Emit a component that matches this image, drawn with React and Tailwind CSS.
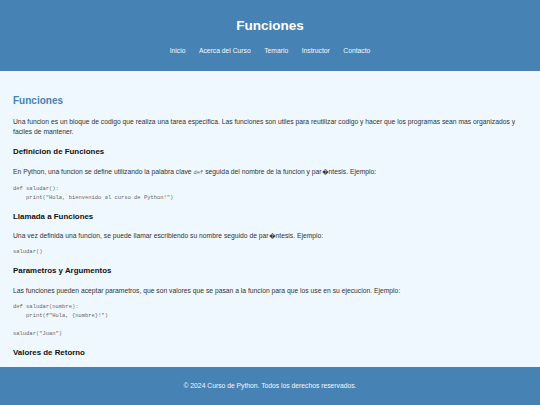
const navItems = ['Inicio', 'Acerca del Curso', 'Temario', 'Instructor', 'Contacto'];

const font = { fontFamily: '"Liberation Sans", Arial, sans-serif' };

function Code({ children }) {
  return (
    <pre className="mt-[6px] text-[5.46px] leading-[9px] text-[#666] font-['Liberation_Mono',monospace] whitespace-pre">
      {children}
    </pre>
  );
}

function H3({ children }) {
  return <h3 className="mt-[9px] text-[7.9px] leading-[12px] font-bold text-[#111]">{children}</h3>;
}

function P({ children }) {
  return <p className="mt-[8.5px] text-[6.75px] leading-[10px] text-[#333]">{children}</p>;
}

export default function App() {
  return (
    <div className="h-[405px] flex flex-col bg-[#f0f8ff] overflow-hidden" style={font}>
      {/* Header */}
      <header className="bg-[#4682b4] text-white h-[71px] shrink-0 flex flex-col items-center pt-[18px]">
        <h1 className="text-[13.5px] leading-[16px] font-bold">Funciones</h1>
        <nav className="mt-[12px] flex gap-[13.5px] text-[6.75px] leading-[10px]">
          {navItems.map(item => (
            <a key={item} className="text-[#f4f8fc]">{item}</a>
          ))}
        </nav>
      </header>

      {/* Content */}
      <main className="flex-1 overflow-hidden px-[13px] pt-[13px]">
        <h2 className="mt-[8.5px] text-[10px] leading-[15px] font-bold text-[#4682b4]">Funciones</h2>
        <p className="mt-[9.5px] text-[6.75px] leading-[10px] text-[#333]">
          Una funcion es un bloque de codigo que realiza una tarea especifica. Las funciones son utiles para reutilizar codigo y hacer que los programas sean mas organizados y faciles de mantener.
        </p>

        <H3>Definicion de Funciones</H3>
        <P>
          En Python, una funcion se define utilizando la palabra clave{' '}
          <code className="text-[5.46px] text-[#666] font-['Liberation_Mono',monospace]">def</code>{' '}
          seguida del nombre de la funcion y par{'\uFFFD'}ntesis. Ejemplo:
        </P>
        <Code>{`def saludar():
    print("Hola, bienvenido al curso de Python!")`}</Code>

        <H3>Llamada a Funciones</H3>
        <P>Una vez definida una funcion, se puede llamar escribiendo su nombre seguido de par{'\uFFFD'}ntesis. Ejemplo:</P>
        <Code>{`saludar()`}</Code>

        <H3>Parametros y Argumentos</H3>
        <P>Las funciones pueden aceptar parametros, que son valores que se pasan a la funcion para que los use en su ejecucion. Ejemplo:</P>
        <Code>{`def saludar(nombre):
    print(f"Hola, {nombre}!")

saludar("Juan")`}</Code>

        <H3>Valores de Retorno</H3>
      </main>

      {/* Footer */}
      <footer className="bg-[#4682b4] h-[38px] shrink-0 flex items-center justify-center text-[#f4f8fc] text-[6.75px]">
        © 2024 Curso de Python. Todos los derechos reservados.
      </footer>
    </div>
  );
}
